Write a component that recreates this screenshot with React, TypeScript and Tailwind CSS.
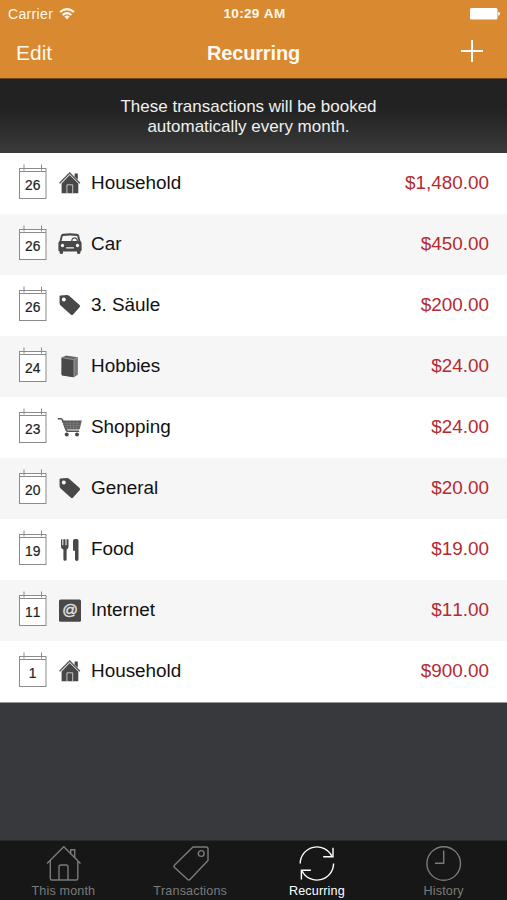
import React from "react";

type IconName = "house" | "car" | "tag" | "book" | "cart" | "food" | "at";

const rows: { day: number; icon: IconName; name: string; amount: string }[] = [
  { day: 26, icon: "house", name: "Household", amount: "$1,480.00" },
  { day: 26, icon: "car", name: "Car", amount: "$450.00" },
  { day: 26, icon: "tag", name: "3. Säule", amount: "$200.00" },
  { day: 24, icon: "book", name: "Hobbies", amount: "$24.00" },
  { day: 23, icon: "cart", name: "Shopping", amount: "$24.00" },
  { day: 20, icon: "tag", name: "General", amount: "$20.00" },
  { day: 19, icon: "food", name: "Food", amount: "$19.00" },
  { day: 11, icon: "at", name: "Internet", amount: "$11.00" },
  { day: 1, icon: "house", name: "Household", amount: "$900.00" },
];

const glyphs: Record<IconName, React.ReactNode> = {
  house: (
    <>
      <path d="M17.6 2.4h3.2v6.4l-3.2-3z" />
      <path d="M2.6 12.2 12.7 2.1l10.2 10.1" fill="none" stroke="#585858" strokeWidth="1.4" />
      <path d="M12.7 4.1 21.3 12.6V22.2H4.6V12.4z" />
      <path d="M9.9 22.2v-8.4h5.8v8.4" fill="none" stroke="#c4c4c4" strokeWidth="1" />
    </>
  ),
  car: (
    <>
      <path
        fillRule="evenodd"
        d="M6.2 1.8Q13 .9 19.8 1.8q1.9.2 2.3 1.8l1.2 5.2q1.3 1 1.3 2.8v6.8l-1.2 1v1.4q0 1.3-1.7 1.3T20 20.8v-1.2H6v1.2q0 1.3-1.7 1.3t-1.7-1.3v-1.4l-1.2-1v-6.8q0-1.8 1.3-2.8l1.2-5.2q.4-1.6 2.3-1.8zM5.8 3.9 4.5 9.1h17L20.2 3.9Q13 3 5.8 3.9zM5.5 11.8a1.7 1.7 0 1 0 .01 0zM20.5 11.8a1.7 1.7 0 1 0 .01 0zM9.2 15.3v1.2h7.6v-1.2z"
      />
      <path d="M14.7 9.2q.2-3.3 2.9-3.3t2.9 3.3" fill="none" stroke="#555" strokeWidth="1.2" />
    </>
  ),
  tag: (
    <path
      fillRule="evenodd"
      d="M3.5 2.6 9.6 2q1.3-.1 2.2.5l10.5 9.2q1.4 1.3.5 2.4l-6.7 7.5q-1.2 1-2.4 0L3.4 12.2q-.8-.8-.8-2L2.5 3.7q0-1 1-1.1zM6.8 4.5a2 2 0 1 0 .01 0z"
    />
  ),
  book: (
    <>
      <path d="M4.6 3.6 9 1.4 20.9 3.2v17.6l-4 2.4L5.5 21.4q-1-.2-1-1.4z" fill="#777" />
      <path d="m4.6 3.6 12.3 2v17.6L5.5 21.4q-1-.2-1-1.4z" />
      <path d="m5.8 3.5 3.6-1.5 10.4 1.6-3 1.3z" fill="#666" />
      <path d="m5.4 3.9 11.5 1.8 3.5-1.8M17 5.8v17" fill="none" stroke="#aaa" strokeWidth=".7" />
    </>
  ),
  cart: (
    <>
      <path d="M.8 3.7h3.1q1 0 1.4 1l3.8 10.1q.4 1.4 1.6 1.4h11.4" fill="none" stroke="#505050" strokeWidth="1.6" />
      <path d="M5.3 5.6h19.5l-2 8.2q-.2.8-1.1.8H8.4z" fill="#5c5c5c" />
      <path d="M6 8.2h18M7 10.5h16.5M8 12.7h15M9.8 6.5l1 7.5M13.2 6.5l.3 7.5M16.7 6.5l-.2 7.5M20.2 6.5l-.8 7.5" stroke="#8c8c8c" strokeWidth=".5" />
      <circle cx="9.7" cy="19.4" r="2" />
      <circle cx="20" cy="19.4" r="2" />
    </>
  ),
  food: (
    <>
      <path d="M4 2.2h1.3v6h1V2.2h2.2v6h1V2.2h2v7.2q0 2.3-1.9 3.1v9.8q0 1.5-1.6 1.5t-1.6-1.5v-9.8Q4 11.7 4 9.4z" />
      <path d="M16 4q0-1.9 2-1.9h1.8q1.7 0 1.7 1.7v18.4q0 1.7-1.8 1.7-1.7 0-1.7-1.7v-8.4h-2z" />
    </>
  ),
  at: (
    <>
      <rect x="2" y="1.5" width="22" height="22.3" rx="1.5" />
      <text x="13" y="17" textAnchor="middle" fill="#e0e0e0" stroke="#e0e0e0" strokeWidth=".4" fontSize="15.5" fontFamily="Liberation Sans, Arial, sans-serif">@</text>
    </>
  ),
};

function Calendar({ day }: { day: number }) {
  return (
    <svg width="29" height="61" viewBox="18 0 29 61" className="shrink-0">
      <g fill="none" stroke="#8b8b8b" strokeWidth="1">
        <rect x="19.5" y="15.5" width="26.5" height="30" fill="#fff" />
        <path d="M19.5 18.5h26.5" />
        <path d="M24 11.5v6M41.5 11.5v6" />
      </g>
      <text x="32.7" y="37" textAnchor="middle" fontSize="13.8" stroke="#222" strokeWidth=".2" fill="#222" fontFamily="Liberation Sans, Arial, sans-serif">
        {day}
      </text>
    </svg>
  );
}

const tabs = [
  {
    label: "This month",
    active: false,
    icon: (
      <path d="M2 18.5 18.8 1.8 35.5 18.5M5.3 15.5v18q0 1.5 1.5 1.5H14V22q0-2 2-2h5q2 0 2 2v13h8.3q1.5 0 1.5-1.5v-18M25.7 8.5V4.7h4v8M14 35h9" />
    ),
  },
  {
    label: "Transactions",
    active: false,
    icon: (
      <>
        <path d="M21 2h13q2 0 2 2v11.5L18.2 34.3q-1.3 1.4-2.8 0L2.6 22.5q-1.3-1.2 0-2.6z" />
        <circle cx="29.2" cy="8.5" r="2.9" />
      </>
    ),
  },
  {
    label: "Recurring",
    active: true,
    icon: (
      <>
        <path d="M2.2 18.5A16.7 16.7 0 0 1 34 11.5M35.6 18.5A16.7 16.7 0 0 1 3.8 25.5" />
        <path d="M35 2.7v9h-9.8M3.4 34.5V25.2h9.5" />
      </>
    ),
  },
  {
    label: "History",
    active: false,
    icon: (
      <>
        <circle cx="18.7" cy="18.5" r="16.8" />
        <path d="M18.7 5.5v12.7H10" />
      </>
    ),
  },
];

export default function App() {
  return (
    <div className="flex h-[900px] w-[507px] flex-col overflow-hidden bg-[#38393c] font-['Liberation_Sans',Arial,sans-serif] [font-kerning:none]">
      <header className="flex h-[79px] shrink-0 flex-col border-b border-[#6b4a24] bg-[#d98930] text-[#fff8ee]">
        <div className="grid h-7 grid-cols-3 items-center pl-2 pr-[6px] text-[13.5px]">
          <div className="flex items-center gap-[6px]">
            <span className="text-[14px] tracking-[0.35px]">Carrier</span>
            <svg width="16" height="12" viewBox="0 0 16 12" fill="none" stroke="currentColor" strokeWidth="2">
              <path d="M1 4.1Q8-1.9 15 4.1M3.6 7Q8 3.2 12.4 7" />
              <path d="M5.4 8.6Q8 6.6 10.6 8.6L8 11.5z" fill="currentColor" stroke="none" />
            </svg>
          </div>
          <span className="text-center font-bold tracking-[0.35px]">10:29 AM</span>
          <div className="flex justify-end">
            <svg width="31" height="12" viewBox="0 0 31 12" fill="#fff">
              <rect x="0" y="0" width="27.5" height="11.5" rx="1.5" />
              <path d="M28.2 3.8q1.9.3 1.9 2t-1.9 2z" />
            </svg>
          </div>
        </div>
        <div className="grid h-[50px] grid-cols-3 items-center pl-4 pr-[24px]">
          <span className="text-[21px]">Edit</span>
          <span className="pl-2 text-center text-[20px] font-bold tracking-[-0.15px]">Recurring</span>
          <svg width="22" height="22" viewBox="0 0 22 22" className="mb-1 justify-self-end" stroke="#fff" strokeWidth="2">
            <path d="M0 11h22M11 0v22" />
          </svg>
        </div>
      </header>

      <div className="h-[74px] shrink-0 bg-linear-to-b from-[#222] from-40% to-[#3b3b3b] pt-[18px] text-center text-[17px] leading-[20px] text-[#f0f0f0]">
        <p className="pr-[10px]">
          These transactions will be booked
          <br />
          automatically every month.
        </p>
      </div>

      <main className="shrink-0 border-b border-[#999]">
        {rows.map((row, i) => (
          <div key={i} className="flex h-[61px] items-center bg-white pl-[18px] pr-[18px] text-[18.9px] even:bg-[#f6f6f6]">
            <Calendar day={row.day} />
            <svg width="26" height="26" viewBox="0 0 26 26" className="ml-[10px] shrink-0" fill="#484848">
              {glyphs[row.icon]}
            </svg>
            <span className="ml-2 grow text-[#111]">{row.name}</span>
            <span className="text-[#b52a30]">{row.amount}</span>
          </div>
        ))}
      </main>

      <nav className="mt-auto grid h-[60px] shrink-0 grid-cols-4 border-t border-[#28292a] bg-[#171717]">
        {tabs.map((tab) => (
          <div key={tab.label} className={tab.active ? "flex flex-col items-center pt-1 text-white" : "flex flex-col items-center pt-1 text-[#7b7b7b]"}>
            <svg width="37" height="37" viewBox="0 0 37 37" fill="none" stroke="currentColor" strokeWidth="1.4">
              {tab.icon}
            </svg>
            <span className="mt-[2px] text-[12.6px] leading-[15px] tracking-[0.15px]">{tab.label}</span>
          </div>
        ))}
      </nav>
    </div>
  );
}
